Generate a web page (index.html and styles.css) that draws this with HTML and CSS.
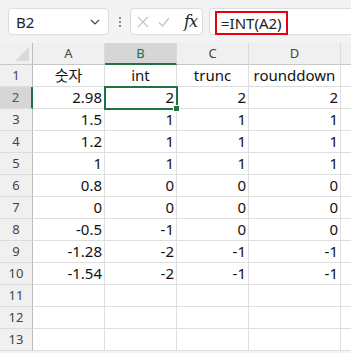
FILE: index.html
```html
<!DOCTYPE html>
<html lang="ko">
<head>
    <meta charset="UTF-8">
    <meta name="viewport" content="width=device-width, initial-scale=1.0">
    <title>INT vs TRUNC vs ROUNDDOWN</title>
    <link rel="stylesheet" href="styles.css">
</head>
<body>
    <!-- Formula bar -->
    <div class="toolbar">
        <div class="namebox">
            <span>B2</span>
            <svg class="chevron" width="10" height="6" viewBox="0 0 10 6">
                <polyline points="1,1 5,5 9,1" fill="none" stroke="#444" stroke-width="1.2"/>
            </svg>
        </div>
        <div class="grip"><span></span><span></span><span></span></div>
        <div class="fbuttons">
            <svg width="12" height="12" viewBox="0 0 12 12">
                <path d="M1 1 L11 11 M11 1 L1 11" stroke="#c4c4c4" stroke-width="1.2" fill="none"/>
            </svg>
            <svg width="12" height="12" viewBox="0 0 12 12">
                <polyline points="1,6.5 4.5,10 11,2" stroke="#c4c4c4" stroke-width="1.2" fill="none"/>
            </svg>
            <span class="fx">fx</span>
        </div>
        <div class="formula">
            <span class="formula-text">=INT(A2)</span>
        </div>
    </div>

    <!-- Sheet -->
    <div class="sheet">
        <div class="corner">
            <svg width="14" height="14" viewBox="0 0 14 14"><polygon points="14,0 14,14 0,14" fill="#dadada"/></svg>
        </div>
        <div class="colhead">A</div>
        <div class="colhead selected">B</div>
        <div class="colhead">C</div>
        <div class="colhead">D</div>
        <div class="colhead"></div>

        <div class="rowhead">1</div>
        <div class="cell center">숫자</div>
        <div class="cell center">int</div>
        <div class="cell center">trunc</div>
        <div class="cell center">rounddown</div>
        <div class="cell"></div>

        <div class="rowhead selected">2</div>
        <div class="cell">2.98</div>
        <div class="cell active">2<span class="handle"></span></div>
        <div class="cell">2</div>
        <div class="cell">2</div>
        <div class="cell"></div>

        <div class="rowhead">3</div>
        <div class="cell">1.5</div>
        <div class="cell">1</div>
        <div class="cell">1</div>
        <div class="cell">1</div>
        <div class="cell"></div>

        <div class="rowhead">4</div>
        <div class="cell">1.2</div>
        <div class="cell">1</div>
        <div class="cell">1</div>
        <div class="cell">1</div>
        <div class="cell"></div>

        <div class="rowhead">5</div>
        <div class="cell">1</div>
        <div class="cell">1</div>
        <div class="cell">1</div>
        <div class="cell">1</div>
        <div class="cell"></div>

        <div class="rowhead">6</div>
        <div class="cell">0.8</div>
        <div class="cell">0</div>
        <div class="cell">0</div>
        <div class="cell">0</div>
        <div class="cell"></div>

        <div class="rowhead">7</div>
        <div class="cell">0</div>
        <div class="cell">0</div>
        <div class="cell">0</div>
        <div class="cell">0</div>
        <div class="cell"></div>

        <div class="rowhead">8</div>
        <div class="cell">-0.5</div>
        <div class="cell">-1</div>
        <div class="cell">0</div>
        <div class="cell">0</div>
        <div class="cell"></div>

        <div class="rowhead">9</div>
        <div class="cell">-1.28</div>
        <div class="cell">-2</div>
        <div class="cell">-1</div>
        <div class="cell">-1</div>
        <div class="cell"></div>

        <div class="rowhead">10</div>
        <div class="cell">-1.54</div>
        <div class="cell">-2</div>
        <div class="cell">-1</div>
        <div class="cell">-1</div>
        <div class="cell"></div>

        <div class="rowhead">11</div>
        <div class="cell"></div>
        <div class="cell"></div>
        <div class="cell"></div>
        <div class="cell"></div>
        <div class="cell"></div>

        <div class="rowhead">12</div>
        <div class="cell"></div>
        <div class="cell"></div>
        <div class="cell"></div>
        <div class="cell"></div>
        <div class="cell"></div>

        <div class="rowhead">13</div>
        <div class="cell"></div>
        <div class="cell"></div>
        <div class="cell"></div>
        <div class="cell"></div>
        <div class="cell"></div>
    </div>
</body>
</html>
```

FILE: styles.css
```css
body {
    margin: 0;
    font-family: "Noto Sans", "Noto Sans CJK KR", sans-serif;
    background-color: #f3f3f3;
    overflow: hidden;
    width: 351px;
    height: 353px;
}

.toolbar {
    display: flex;
    align-items: stretch;
    height: 27px;
    padding: 8px 0 8px 8px;
}

.namebox {
    width: 101px;
    box-sizing: border-box;
    display: flex;
    align-items: center;
    justify-content: space-between;
    padding: 0 8px 0 7px;
    background-color: white;
    border: 1px solid #dcdcdc;
    border-radius: 4px;
    font-size: 15px;
    color: #222;
}

.chevron {
    margin-top: 1px;
}

.grip {
    width: 21px;
    display: flex;
    flex-direction: column;
    align-items: center;
    justify-content: center;
    gap: 2px;
}

.grip span {
    width: 2px;
    height: 2px;
    background-color: #8a8a8a;
}

.fbuttons {
    width: 73px;
    box-sizing: border-box;
    display: flex;
    align-items: center;
    gap: 9px;
    padding-left: 6px;
    background-color: white;
    border: 1px solid #dcdcdc;
    border-radius: 4px;
}

.fx {
    font-family: "DejaVu Serif", "Liberation Serif", serif;
    font-style: italic;
    font-size: 16px;
    color: #222;
    margin-left: 5px;
    letter-spacing: -1px;
}

.formula {
    flex: 1;
    margin-left: 6px;
    display: flex;
    align-items: flex-end;
    padding-left: 5px;
    background-color: white;
    border: 1px solid #dcdcdc;
    border-right: none;
    border-radius: 4px 0 0 4px;
}

.formula-text {
    height: 20px;
    line-height: 20px;
    padding: 0 4px;
    margin-bottom: -1px;
    border: 2px solid #e8000b;
    font-size: 15px;
    color: #222;
}

.sheet {
    display: grid;
    grid-template-columns: 33px 72px 72px 72px 92px 20px;
    grid-auto-rows: 22px;
    background-color: white;
}

.sheet > div {
    box-sizing: border-box;
}

.corner {
    background-color: #f0f0f0;
    border-right: 1px solid #bdbdbd;
    border-bottom: 1px solid #c8c8c8;
    display: flex;
    align-items: flex-end;
    justify-content: flex-end;
    padding: 0 3px 3px 0;
}

.colhead {
    background-color: #f0f0f0;
    border-right: 1px solid #dcdcdc;
    border-bottom: 1px solid #c8c8c8;
    text-align: center;
    font-size: 13px;
    line-height: 21px;
    color: #444;
}

.colhead.selected {
    background-color: #d6d6d6;
    color: #217346;
    border-bottom: 2px solid #217346;
}

.rowhead {
    background-color: #f0f0f0;
    border-right: 1px solid #bdbdbd;
    border-bottom: 1px solid #dcdcdc;
    text-align: center;
    font-size: 13px;
    line-height: 21px;
    color: #444;
}

.rowhead.selected {
    background-color: #d6d6d6;
    color: #217346;
    border-right: 2px solid #217346;
}

.cell {
    position: relative;
    border-right: 1px solid #dedede;
    border-bottom: 1px solid #dedede;
    text-align: right;
    padding-right: 2px;
    font-size: 15px;
    line-height: 21px;
    color: #111;
}

.cell.center {
    text-align: center;
    padding-right: 0;
}

.cell.active {
    outline: 2px solid #217346;
    outline-offset: -1px;
    z-index: 1;
}

.handle {
    position: absolute;
    right: -4px;
    bottom: -4px;
    width: 5px;
    height: 5px;
    background-color: #217346;
    border: 1px solid white;
}
```
